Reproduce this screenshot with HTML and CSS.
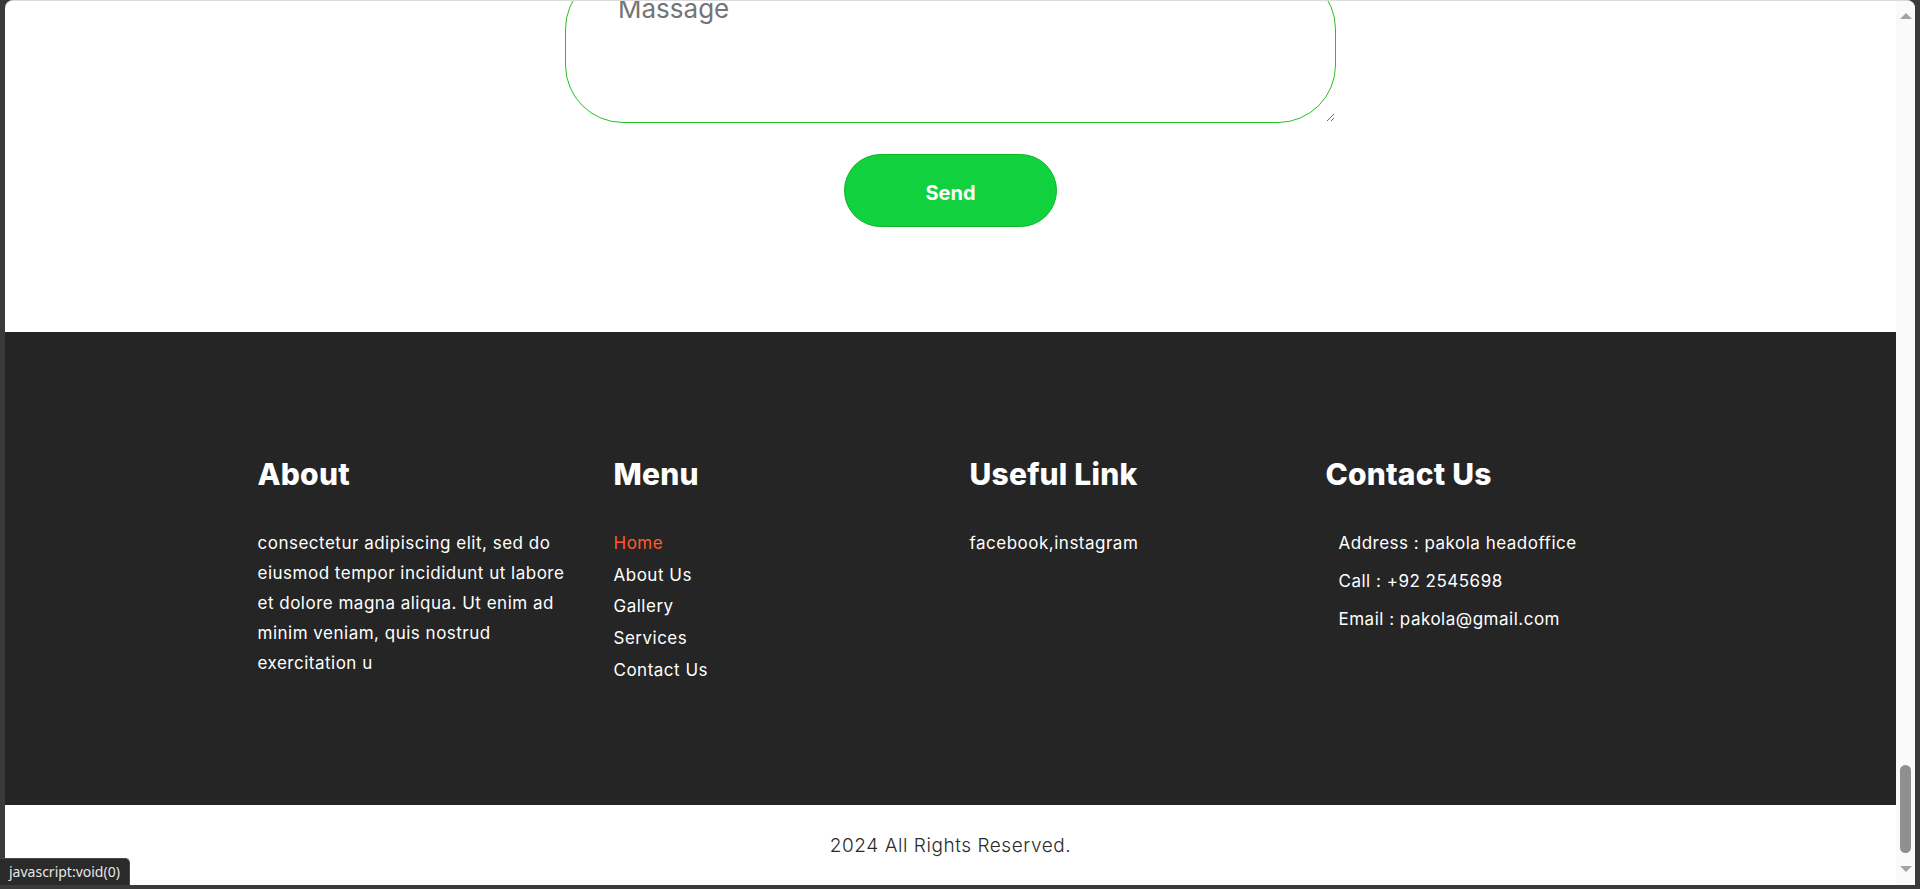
FILE: index.html
```html
<!DOCTYPE html>
<html lang="en">
<head>
<meta charset="utf-8">
<title>Contact</title>
<link rel="stylesheet" href="styles.css">
</head>
<body>
<div class="window">
  <div class="viewport">
    <section class="contact-form">
      <textarea class="message" placeholder="Massage"></textarea>
      <button class="send" type="button">Send</button>
    </section>
    <footer class="site-footer">
      <div class="footer-grid">
        <div class="col">
          <h3 class="col-title">About</h3>
          <p class="about-text">consectetur adipiscing elit, sed do eiusmod tempor incididunt ut labore et dolore magna aliqua. Ut enim ad minim veniam, quis nostrud exercitation u</p>
        </div>
        <div class="col">
          <h3 class="col-title">Menu</h3>
          <ul class="menu">
            <li><a class="menu-link active" href="#">Home</a></li>
            <li><a class="menu-link" href="#">About Us</a></li>
            <li><a class="menu-link" href="#">Gallery</a></li>
            <li><a class="menu-link" href="#">Services</a></li>
            <li><a class="menu-link" href="#">Contact Us</a></li>
          </ul>
        </div>
        <div class="col">
          <h3 class="col-title">Useful Link</h3>
          <p class="useful-text">facebook,instagram</p>
        </div>
        <div class="col">
          <h3 class="col-title">Contact Us</h3>
          <ul class="contact-list">
            <li>Address : pakola headoffice</li>
            <li>Call : +92 2545698</li>
            <li>Email : pakola@gmail.com</li>
          </ul>
        </div>
      </div>
    </footer>
    <div class="copyright">
      <p class="copyright-text">2024 All Rights Reserved.</p>
    </div>
  </div>
  <div class="scrollbar">
    <span class="arrow arrow-up"></span>
    <div class="track"><span class="thumb"></span></div>
    <span class="arrow arrow-down"></span>
  </div>
</div>
<div class="status">javascript:void(0)</div>
</body>
</html>
```

FILE: styles.css
```css
* { box-sizing: border-box; }

html, body {
  margin: 0;
  height: 889px;
  overflow: hidden;
}

body {
  background: #3a3a3a;
  padding: 0 5px 4px 5px;
  font-family: "Inter", "Open Sans", sans-serif;
}

.window {
  display: flex;
  height: 885px;
  background: #ffffff;
  border-top: 1px solid #dcdcdc;
  border-radius: 8px 8px 0 0;
  overflow: hidden;
}

.viewport {
  flex: 1;
  display: flex;
  flex-direction: column;
  justify-content: flex-end;
  overflow: hidden;
}

.viewport > * { flex-shrink: 0; }

/* form */
.contact-form {
  display: flex;
  flex-direction: column;
  align-items: center;
  padding-bottom: 105px;
}

.message {
  width: 771px;
  height: 152px;
  padding: 19px 52px;
  border: 1px solid #27c027;
  border-radius: 58px;
  font-family: inherit;
  font-size: 26px;
  line-height: 36px;
  color: #444;
  outline: none;
  display: block;
}

.message::placeholder { color: #757575; }

.send {
  margin-top: 31px;
  width: 213px;
  height: 73px;
  padding-top: 5px;
  border: 1px solid #0cb521;
  border-radius: 37px;
  background: #11d13f;
  color: #ffffff;
  font-family: inherit;
  font-size: 20px;
  font-weight: 700;
  cursor: pointer;
}

/* footer */
.site-footer {
  background: #252525;
  color: #ffffff;
  height: 473px;
  padding-top: 124px;
}

.footer-grid {
  width: 1424px;
  margin: 0 auto;
  display: grid;
  grid-template-columns: repeat(4, 1fr);
}

.col { padding: 0 20px 0 19px; }

.col-title {
  margin: 0 0 36px;
  font-size: 30px;
  line-height: 36px;
  font-weight: 800;
  letter-spacing: 0.2px;
}

.about-text,
.useful-text {
  margin: 0;
  font-size: 17px;
  line-height: 30px;
  letter-spacing: 0.5px;
}

.menu,
.contact-list {
  list-style: none;
  margin: 0;
  padding: 0;
  font-size: 17px;
  letter-spacing: 0.5px;
}

.menu li { line-height: 31.7px; }

.menu-link {
  color: #ffffff;
  text-decoration: none;
}

.menu-link.active { color: #ff5a2b; }

.contact-list { padding-left: 13px; }
.contact-list li { line-height: 38px; }
.contact-list li:first-child { margin-top: -4px; }

/* copyright */
.copyright {
  height: 80px;
  padding-top: 27px;
  text-align: center;
}

.copyright-text {
  margin: 0;
  font-size: 19px;
  line-height: 28px;
  font-weight: 300;
  letter-spacing: 0.55px;
  color: #2b2b2b;
}

/* fake scrollbar */
.scrollbar {
  width: 19px;
  background: #fafafa;
  display: flex;
  flex-direction: column;
  align-items: center;
  padding: 12px 0 13px;
}

.arrow {
  width: 0;
  height: 0;
  border-left: 6px solid transparent;
  border-right: 6px solid transparent;
}

.arrow-up { border-bottom: 6px solid #a3a3a3; }
.arrow-down { border-top: 6px solid #a3a3a3; }

.track {
  flex: 1;
  width: 100%;
  display: flex;
  flex-direction: column;
  justify-content: flex-end;
  align-items: center;
  padding-bottom: 13px;
}

.thumb {
  width: 11px;
  height: 88px;
  border-radius: 6px;
  background: #8f8f8f;
}

/* status bubble */
.status {
  position: fixed;
  left: 0;
  bottom: 4px;
  height: 27px;
  padding: 0 9px;
  background: #2a2a2a;
  border: 1px solid #4a4a4a;
  border-left: none;
  border-bottom: none;
  border-radius: 0 5px 0 0;
  color: #e6e6e6;
  font-family: "Noto Sans", sans-serif;
  font-size: 14px;
  line-height: 26px;
}
```
